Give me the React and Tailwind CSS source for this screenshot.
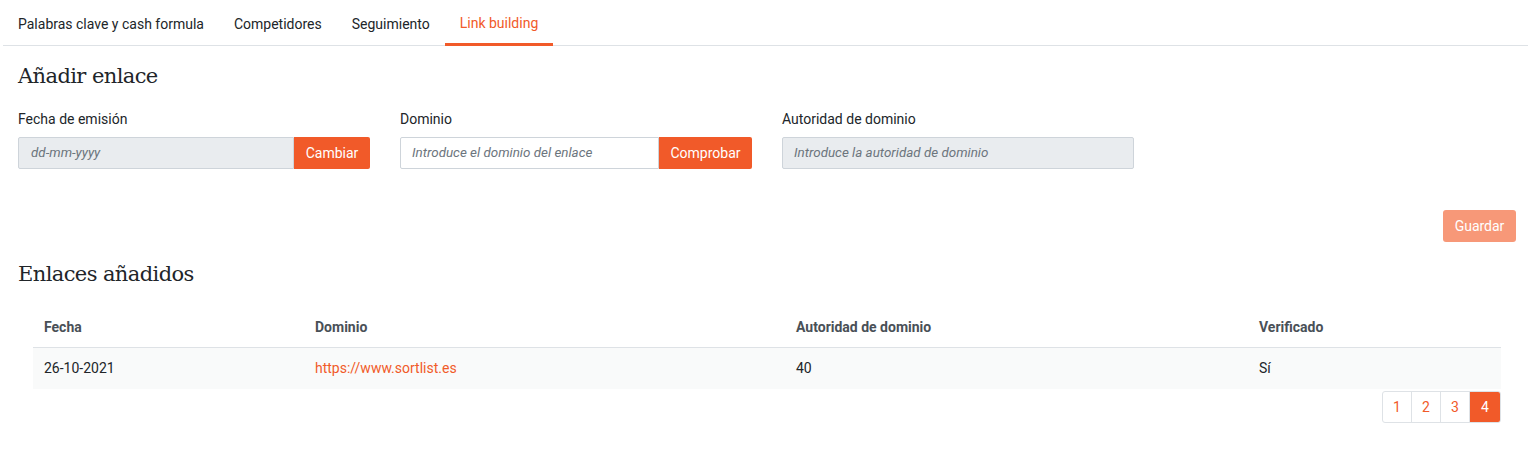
export default function App() {
  const tabs = ["Palabras clave y cash formula", "Competidores", "Seguimiento", "Link building"];
  const serif = { fontFamily: "'DejaVu Serif', 'Liberation Serif', serif", letterSpacing: "-0.6px" };
  return (
    <div className="w-[1528px] h-[452px] bg-white text-[#212529] text-[14px]" style={{ fontFamily: "Roboto, 'Liberation Sans', sans-serif" }}>
      <div className="ml-[3px] flex border-b border-[#dee2e6] h-[46px]">
        {tabs.map((t, i) => (
          <div
            key={t}
            className={
              "px-[15px] flex items-center h-[46px] " +
              (i === 3 ? "text-[#f15a29] border-b-[3px] border-[#f15a29] pt-[4px]" : "text-[#212529] pt-[2px]")
            }
          >
            {t}
          </div>
        ))}
      </div>
      <div className="pl-[18px] pr-[12px]">
        <h2 className="mt-[15px] text-[21px] leading-[30px] text-[#212529]" style={serif}>
          Añadir enlace
        </h2>
        <div className="grid grid-cols-4 gap-[30px] mt-[18px]">
          <div>
            <div className="leading-[20px] mb-[8px]">Fecha de emisión</div>
            <div className="flex h-[32px]">
              <div className="flex-1 border border-[#ced4da] bg-[#e9ecef] rounded-l-[2px] flex items-center px-[12px] italic text-[13.4px] text-[#6c757d]">dd-mm-yyyy</div>
              <div className="w-[76px] bg-[#f15a29] text-white flex items-center justify-center rounded-r-[2px]">Cambiar</div>
            </div>
          </div>
          <div>
            <div className="leading-[20px] mb-[8px]">Dominio</div>
            <div className="flex h-[32px]">
              <div className="flex-1 border border-[#ced4da] bg-white rounded-l-[2px] flex items-center px-[11px] italic text-[13.4px] text-[#6c757d]">Introduce el dominio del enlace</div>
              <div className="w-[93px] bg-[#f15a29] text-white flex items-center justify-center rounded-r-[2px]">Comprobar</div>
            </div>
          </div>
          <div>
            <div className="leading-[20px] mb-[8px]">Autoridad de dominio</div>
            <div className="flex h-[32px]">
              <div className="flex-1 border border-[#ced4da] bg-[#e9ecef] rounded-[2px] flex items-center px-[11px] italic text-[13.4px] text-[#6c757d]">Introduce la autoridad de dominio</div>
            </div>
          </div>
        </div>
        <div className="flex justify-end mt-[41px]">
          <div className="w-[73px] h-[32px] bg-[#f79878] text-white rounded-[3px] flex items-center justify-center">Guardar</div>
        </div>
        <h2 className="mt-[17px] text-[21px] leading-[30px] text-[#212529]" style={serif}>
          Enlaces añadidos
        </h2>
        <div className="ml-[15px] mr-[15px] mt-[19px]">
          <div className="flex h-[40px] items-center font-bold text-[#495057] border-b border-[#dee2e6]">
            <div className="w-[271px] pl-[11px]">Fecha</div>
            <div className="w-[481px] pl-[11px]">Dominio</div>
            <div className="w-[463px] pl-[11px]">Autoridad de dominio</div>
            <div className="flex-1 pl-[11px]">Verificado</div>
          </div>
          <div className="flex h-[41px] items-center bg-[#f9fafa]">
            <div className="w-[271px] pl-[11px]">26-10-2021</div>
            <div className="w-[481px] pl-[11px] text-[#f15a29]">https://www.sortlist.es</div>
            <div className="w-[463px] pl-[11px]">40</div>
            <div className="flex-1 pl-[11px]">Sí</div>
          </div>
          <div className="flex justify-end mt-[2px]">
            <div className="flex h-[32px] border border-[#dee2e6] rounded-[3px] overflow-hidden">
              {["1", "2", "3"].map((n) => (
                <div key={n} className="w-[29px] flex items-center justify-center text-[#f15a29] border-r border-[#dee2e6]">{n}</div>
              ))}
              <div className="w-[30px] flex items-center justify-center bg-[#f15a29] text-white">4</div>
            </div>
          </div>
        </div>
      </div>
    </div>
  );
}
